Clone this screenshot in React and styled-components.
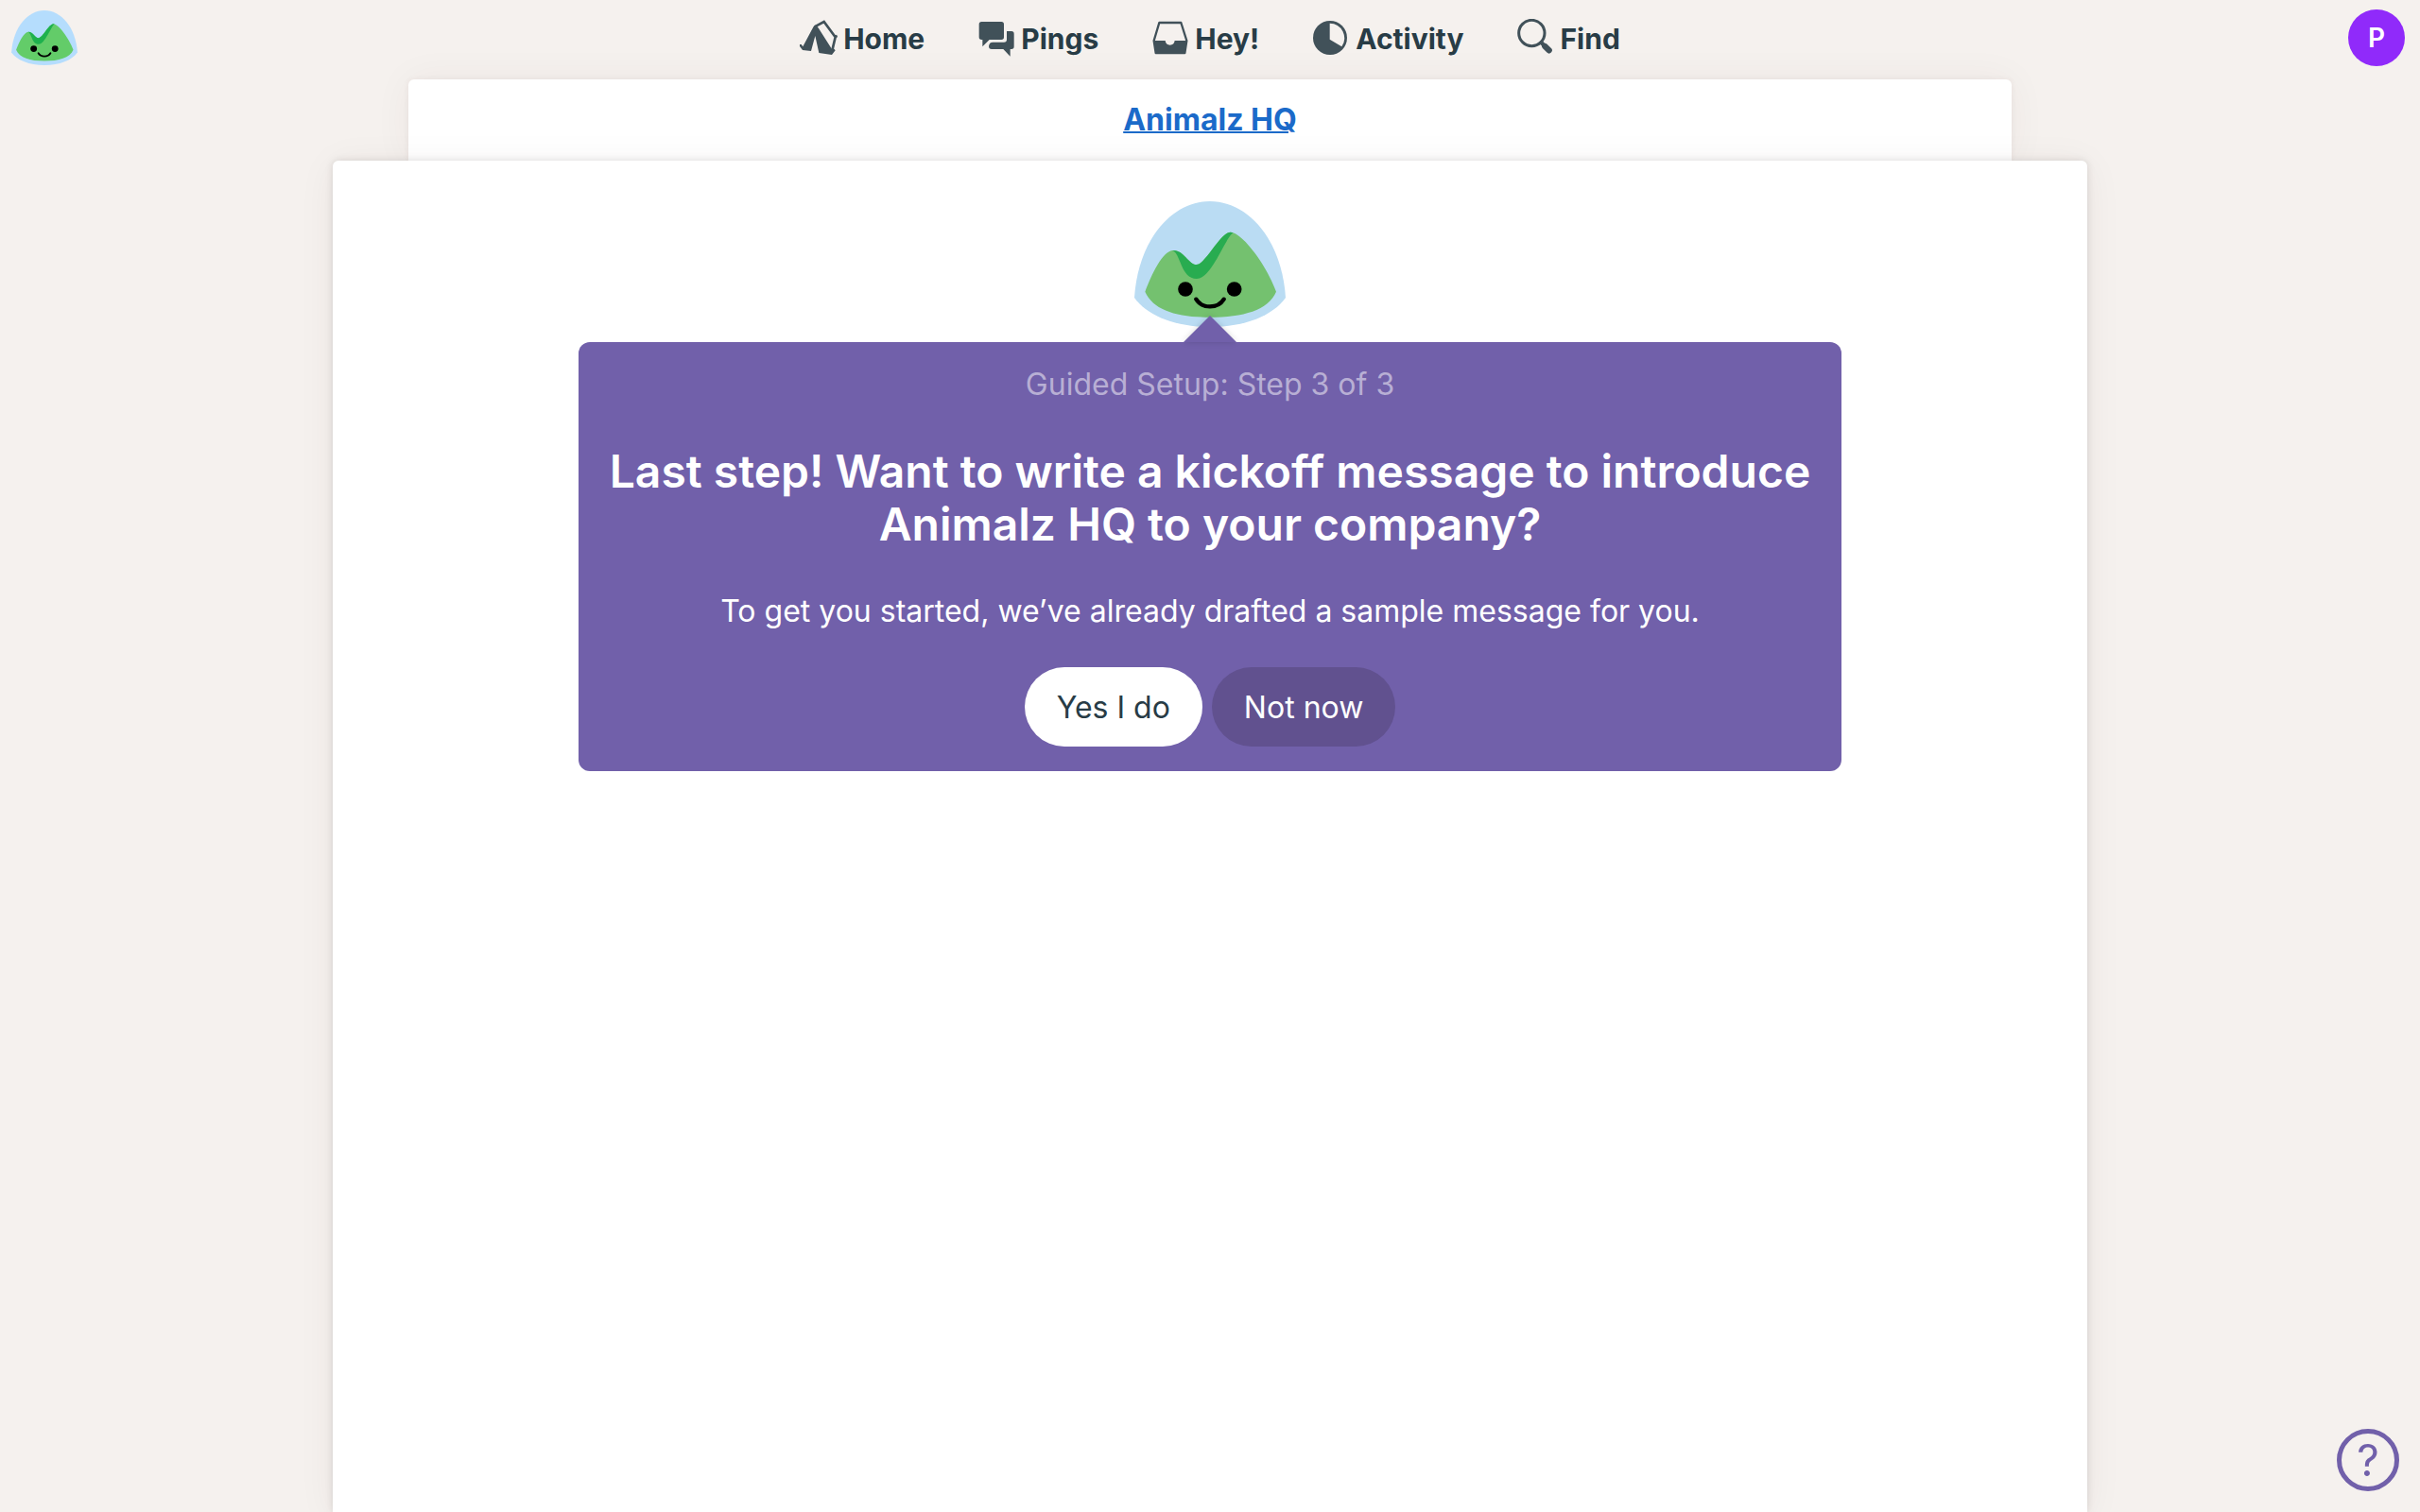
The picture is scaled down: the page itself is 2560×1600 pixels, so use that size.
import styled, { createGlobalStyle } from 'styled-components';

const colors = {
  canvas: '#f5f1ee',
  ink: '#283c46',
  icon: '#415159',
  purple: '#7160aa',
  purpleDark: '#61518f',
  link: '#1b6ac9',
};

const Mountain = ({ dome, hill, shade, ...props }) => (
  <svg viewBox='120 69 480 399' aria-hidden='true' {...props}>
    <path
      fill={dome}
      d='M120 375C132 190 240 69 360 69S588 190 600 375C560 432 470 468 360 468S160 432 120 375Z'
    />
    <path
      fill={hill}
      d='M154 356C175 300 210 226 243 225C275 222 292 270 317 270C345 270 393 167 425 167C460 167 538 268 570 356C545 415 465 437 360 437S180 415 154 356Z'
    />
    <path
      fill={shade}
      d='M240 225C275 220 292 270 317 270C345 270 393 167 425 167L434 169C410 180 366 315 318 315C266 315 268 233 240 225Z'
    />
    <circle cx='282' cy='348' r='23.5' />
    <circle cx='437' cy='348' r='23.5' />
    <path d='M316 380C335 411 385 411 404 380' fill='none' stroke='#000' strokeWidth='13' strokeLinecap='round' />
  </svg>
);

const HomeIcon = () => (
  <NavIcon viewBox='48 60 120 120'>
    <path
      fill='currentColor'
      d='M92 84L100 79L108 90L150 156L157 155L161 160L150 174L109 168L97 114L84 162L57 159L48 147L48 141L53 141L58 148Z'
    />
    <path d='M95 85L125 69L161 118L151 160M158 118L167 114' fill='none' stroke='currentColor' strokeWidth='8' />
  </NavIcon>
);

const PingsIcon = () => (
  <NavIcon viewBox='618 60 120 120'>
    <path
      fill='currentColor'
      d='M631 69H694Q702 69 702 77V118Q702 126 694 126H656L634 148V126H631Q623 126 623 118V77Q623 69 631 69Z'
    />
    <path
      fill='currentColor'
      d='M711 99H726Q734 99 734 107V148Q734 156 726 156H722V179L700 156H663Q654 156 654 147Q655 134 667 134H702Q711 134 711 125Z'
    />
  </NavIcon>
);

const HeyIcon = () => (
  <NavIcon viewBox='1165 60 120 120'>
    <path
      d='M1190 72H1259L1277 129L1271 168H1179L1173 129Z'
      fill='none'
      stroke='currentColor'
      strokeWidth='7'
      strokeLinejoin='round'
    />
    <path fill='currentColor' d='M1173 129H1209Q1211 143 1224 143Q1237 143 1239 129H1277L1271 168H1179Z' />
  </NavIcon>
);

const ActivityIcon = () => (
  <NavIcon viewBox='327 60 120 120'>
    <circle cx='384' cy='120' r='54' fill='currentColor' />
    <path fill={colors.canvas} d='M383 74A47 47 0 0 1 421 148L383 125Z' />
  </NavIcon>
);

const FindIcon = () => (
  <NavIcon viewBox='972 60 120 120'>
    <g fill='none' stroke='currentColor' strokeLinecap='round'>
      <circle cx='1018' cy='105' r='41' strokeWidth='9' />
      <path d='M1049 136L1060 147' strokeWidth='13' />
      <path d='M1060 147L1073 160' strokeWidth='19' />
    </g>
  </NavIcon>
);

const navItems = [
  { label: 'Home', Icon: HomeIcon },
  { label: 'Pings', Icon: PingsIcon },
  { label: 'Hey!', Icon: HeyIcon },
  { label: 'Activity', Icon: ActivityIcon },
  { label: 'Find', Icon: FindIcon },
];

const App = () => {
  return (
    <>
      <GlobalStyle />
      <Page>
        <Header>
          <LogoLink href='#' aria-label='Basecamp'>
            <Mountain dome='#b5ddfd' hill='#63cc69' shade='#1eb14e' width='70' height='58' />
          </LogoLink>
          <Nav>
            {navItems.map(({ label, Icon }) => (
              <NavItem key={label} href='#'>
                <Icon />
                <NavLabel>{label}</NavLabel>
              </NavItem>
            ))}
          </Nav>
          <Avatar type='button'>P</Avatar>
        </Header>
        <Breadcrumb>
          <BreadcrumbLink href='#'>Animalz HQ</BreadcrumbLink>
        </Breadcrumb>
        <Sheet>
          <Mountain dome='#badcf3' hill='#74c16f' shade='#28ac50' width='160' height='133' />
          <Bubble>
            <Step>Guided Setup: Step 3 of 3</Step>
            <Title>Last step! Want to write a kickoff message to introduce Animalz HQ to your company?</Title>
            <Text>To get you started, we’ve already drafted a sample message for you.</Text>
            <Actions>
              <Button type='button' $primary>
                Yes I do
              </Button>
              <Button type='button'>Not now</Button>
            </Actions>
          </Bubble>
        </Sheet>
      </Page>
      <HelpButton type='button'>?</HelpButton>
    </>
  );
};

const GlobalStyle = createGlobalStyle`
  * {
    box-sizing: border-box;
  }
  body {
    margin: 0;
    background: ${colors.canvas};
    color: ${colors.ink};
    font-family: Inter, 'Liberation Sans', sans-serif;
    font-size: 32px;
    line-height: 48px;
  }
  button {
    border: 0;
    padding: 0;
    font: inherit;
    cursor: pointer;
  }
  svg {
    display: block;
    flex: none;
  }
`;

const Page = styled.div`
  display: flex;
  flex-direction: column;
  align-items: center;
  min-height: 100vh;
`;

const Header = styled.header`
  display: grid;
  grid-template-columns: 1fr auto 1fr;
  align-items: center;
  width: 100%;
  padding: 10px 12px 14px;
`;

const LogoLink = styled.a`
  justify-self: start;
`;

const Nav = styled.nav`
  display: flex;
  gap: 56px;
`;

const NavItem = styled.a`
  display: flex;
  align-items: center;
  gap: 6px;
  color: ${colors.ink};
  font-size: 30px;
  font-weight: 700;
  text-decoration: none;
`;

const NavLabel = styled.span`
  padding-top: 2px;
`;

const NavIcon = styled.svg`
  width: 40px;
  height: 40px;
  color: ${colors.icon};
`;

const Avatar = styled.button`
  justify-self: end;
  width: 60px;
  height: 60px;
  margin-right: 4px;
  border-radius: 50%;
  background: #902afa;
  color: #fff;
  && {
    font-size: 28px;
    font-weight: 600;
  }
`;

const Breadcrumb = styled.nav`
  display: flex;
  justify-content: center;
  width: 100%;
  max-width: 1696px;
  padding: 19px 24px;
  border-radius: 6px 6px 0 0;
  background: #fff;
  box-shadow: 0 0 6px rgba(70, 40, 20, 0.06), 0 0 40px rgba(70, 40, 20, 0.05);
`;

const BreadcrumbLink = styled.a`
  color: ${colors.link};
  font-weight: 700;
  text-decoration-thickness: 2px;
`;

const Sheet = styled.main`
  display: flex;
  flex: 1;
  flex-direction: column;
  align-items: center;
  width: 100%;
  max-width: 1856px;
  padding: 43px 24px;
  border-radius: 6px 6px 0 0;
  background: #fff;
  box-shadow: 0 0 8px rgba(0, 0, 0, 0.12), 0 4px 40px rgba(60, 40, 20, 0.06);
  z-index: 1;
`;

const Bubble = styled.section`
  position: relative;
  width: 100%;
  max-width: 1336px;
  margin-top: 16px;
  padding: 21px 24px 26px;
  border-radius: 12px;
  background: ${colors.purple};
  color: #fff;
  text-align: center;

  &::before {
    content: '';
    position: absolute;
    bottom: 100%;
    left: 50%;
    margin-left: -28px;
    border: 28px solid transparent;
    border-top: 0;
    border-bottom-color: ${colors.purple};
    filter: drop-shadow(0 0 3px rgba(0, 0, 0, 0.15));
  }
`;

const Step = styled.p`
  margin: 0;
  color: #b8afd4;
`;

const Title = styled.h1`
  margin: 40px 0;
  font-size: 48px;
  font-weight: 600;
  line-height: 56px;
`;

const Text = styled.p`
  margin: 0;
`;

const Actions = styled.div`
  display: flex;
  justify-content: center;
  gap: 10px;
  margin-top: 35px;
`;

const Button = styled.button`
  height: 84px;
  border-radius: 42px;
  background: ${({ $primary }) => ($primary ? '#fff' : colors.purpleDark)};
  color: ${({ $primary }) => ($primary ? colors.ink : '#fff')};
  && {
    padding: 2px 34px 0;
  }
`;

const HelpButton = styled.button`
  position: fixed;
  right: 22px;
  bottom: 22px;
  z-index: 2;
  width: 66px;
  height: 66px;
  border-radius: 50%;
  background: ${colors.canvas};
  color: ${colors.purple};
  && {
    border: 5px solid ${colors.purple};
    font-size: 46px;
  }
`;

export default App;
